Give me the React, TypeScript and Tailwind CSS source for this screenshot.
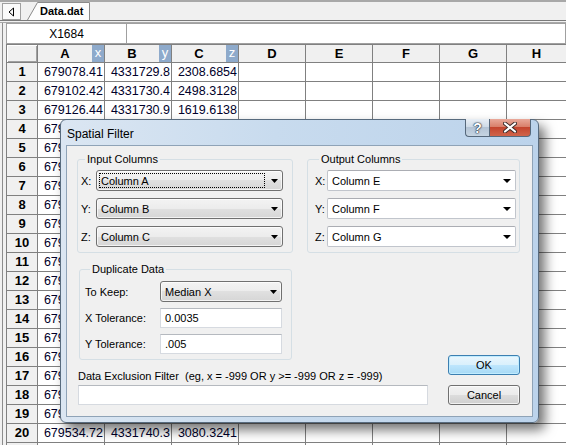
import React from "react";

const data: string[][] = [
  ["679078.41", "4331729.8", "2308.6854"],
  ["679102.42", "4331730.4", "2498.3128"],
  ["679126.44", "4331730.9", "1619.6138"],
  ["679150.45", "", ""],
  ["679174.46", "", ""],
  ["679198.48", "", ""],
  ["679222.49", "", ""],
  ["679246.50", "", ""],
  ["679270.52", "", ""],
  ["679294.53", "", ""],
  ["679318.54", "", ""],
  ["679342.56", "", ""],
  ["679366.57", "", ""],
  ["679390.58", "", ""],
  ["679414.60", "", ""],
  ["679438.61", "", ""],
  ["679462.62", "", ""],
  ["679486.64", "", ""],
  ["679510.65", "", ""],
  ["679534.72", "4331740.3", "3080.3241"],
  ["", "", ""],
];

const cols = ["A", "B", "C", "D", "E", "F", "G"];
const badges: Record<string, string> = { A: "x", B: "y", C: "z" };

const Arrow = () => (
  <svg width="7" height="4" viewBox="0 0 7 4" className="shrink-0">
    <path d="M0 0H7L3.5 4Z" fill="#000" />
  </svg>
);

function GraySelect({ text, focus, w }: { text: string; focus?: boolean; w: string }) {
  return (
    <div
      className={`${w} h-[21px] flex items-center rounded-[3px] border border-[#707070] bg-[linear-gradient(180deg,#f3f3f3_0%,#ececec_50%,#e0e0e0_50%,#d6d6d6_100%)] shadow-[inset_0_0_0_1px_rgba(255,255,255,0.7)] pl-[2px] pr-[4px]`}
    >
      <div className="flex-1 flex items-center">
        {focus ? (
          <span className="w-[166px] h-[15px] flex items-center pl-[1px] border border-dotted border-[#000]">
            {text}
          </span>
        ) : (
          <span className="pl-[2px]">{text}</span>
        )}
      </div>
      <Arrow />
    </div>
  );
}

function WhiteSelect({ text }: { text: string }) {
  return (
    <div className="flex-1 h-[21px] flex items-center rounded-[2px] border border-[#c1c5cc] border-t-[#abadb3] bg-white pl-[4px] pr-[4px]">
      <span className="flex-1">{text}</span>
      <svg width="8" height="4" viewBox="0 0 8 4" className="shrink-0">
        <path d="M0 0H8L4 4Z" fill="#000" />
      </svg>
    </div>
  );
}

function TextBox({ text, w }: { text: string; w: string }) {
  return (
    <div className={`${w} h-[20px] flex items-center border border-[#d6dae0] border-t-[#b5b9bf] bg-white pl-[4px]`}>
      {text}
    </div>
  );
}

export default function App() {
  return (
    <div className="relative w-[566px] h-[445px] overflow-hidden bg-[#f0f0f0] font-['Liberation_Sans',Arial,sans-serif] text-black">
      {/* Tab strip */}
      <div className="h-[21px] border-t-2 border-b border-t-[#a8a8a8] border-b-[#7a7a7a] flex items-end">
        <div className="ml-[2px] mb-[1px] w-[19px] h-[17px] border border-[#a0a0a0] bg-[#fafafa] flex items-center justify-center self-start mt-[1px]">
          <svg width="7" height="10" viewBox="0 0 7 10">
            <path d="M5.5 1V9L1 5Z" fill="none" stroke="#000" strokeWidth="1" />
          </svg>
        </div>
        <div className="relative ml-[6px] w-[64px] h-[19px]">
          <svg className="absolute inset-0" width="64" height="19" viewBox="0 0 64 19">
            <path d="M0.5 19L10.5 1.5H62.5V19" fill="#fdfdfd" stroke="#8a8a8a" strokeWidth="1" />
          </svg>
          <span className="absolute left-[13px] top-[3px] text-[11px] leading-[14px] font-bold">Data.dat</span>
        </div>
      </div>
      <div className="h-[2px] border-b border-[#a8a8a8]" />

      {/* Body */}
      <div className="ml-[2px] border-l border-[#8c8c8c] pl-[3px]">
        {/* name bar */}
        <div className="h-[21px] flex bg-white">
          <div className="w-[121px] border border-[#a0a0a0] flex items-center justify-center text-[12px]">X1684</div>
          <div className="flex-1 border border-l-0 border-[#a0a0a0]" />
        </div>

        {/* grid */}
        <div className="flex flex-col text-[13px]">
          <div className="flex h-[19px]">
            <div className="w-[32px] shrink-0 border border-[#808080] bg-[#f0f0f0] shadow-[inset_1px_1px_0_#fff,inset_-1px_-1px_0_#a0a0a0]" />
            {cols.map((c) => (
              <div
                key={c}
                className="w-[67px] shrink-0 flex border-t border-r border-b border-[#808080] bg-[#f0f0f0] font-bold leading-[17px]"
              >
                <span className="flex-1 text-center">{c}</span>
                {badges[c] && (
                  <span className="w-[12px] bg-[#8eaacb] text-white font-normal text-center leading-[15px]">
                    {badges[c]}
                  </span>
                )}
              </div>
            ))}
            <div className="flex-1 border-t border-b border-[#808080] bg-[#f0f0f0] font-bold text-center leading-[17px]">
              H
            </div>
          </div>
          {data.map((r, i) => (
            <div key={i} className="flex h-[19px]">
              <div className="w-[32px] shrink-0 border-l border-r border-b border-[#808080] bg-[#f0f0f0] font-bold text-center leading-[18px]">
                {i < 20 ? i + 1 : ""}
              </div>
              {cols.map((c, j) => (
                <div
                  key={c}
                  className="w-[67px] shrink-0 border-r border-b border-[#808080] bg-white text-right pr-[1px] text-[12.5px] leading-[18px] text-[#00002a] overflow-hidden whitespace-nowrap"
                >
                  {j < 3 ? r[j] : ""}
                </div>
              ))}
              <div className="flex-1 border-b border-[#808080] bg-white" />
            </div>
          ))}
        </div>
      </div>

      {/* Dialog */}
      <div className="absolute left-[60px] top-[119px] w-[479px] h-[304px] rounded-[6px] border border-[#586b7e] bg-[linear-gradient(90deg,#dbe6f2_0%,#c8dbee_45%,#bcd3eb_100%)] shadow-[6px_7px_12px_rgba(0,0,0,0.55)] flex flex-col px-[5px] pb-[5px]">
        <div className="h-[25px] flex justify-between shrink-0">
          <span className="pl-[1px] pt-[6px] text-[12px] leading-[16px]">Spatial Filter</span>
          <div className="flex -mt-[1px] mr-[2px] h-[18px]">
            <div className="w-[24px] h-[18px] rounded-bl-[4px] border border-t-0 border-r-0 border-[#56687b] bg-[linear-gradient(180deg,#e8eef5_0%,#cfdbe7_45%,#b4c4d5_50%,#c6d4e2_100%)] flex items-center justify-center text-white font-bold text-[14px] leading-[14px] [text-shadow:0_0_1px_#1c2a38,0_0_1px_#1c2a38,0_0_2px_#1c2a38]">
              ?
            </div>
            <div className="w-[42px] h-[18px] rounded-br-[4px] border border-t-0 border-[#56687b] bg-[linear-gradient(180deg,#e9a99a_0%,#d9806b_45%,#c4452e_50%,#d0644a_100%)] flex items-center justify-center">
              <svg width="14" height="11" viewBox="0 0 14 11">
                <path d="M2 1.5L12 9.5M12 1.5L2 9.5" stroke="#3a2a28" strokeWidth="4" strokeLinecap="round" />
                <path d="M2 1.5L12 9.5M12 1.5L2 9.5" stroke="#fff" strokeWidth="2.2" strokeLinecap="round" />
              </svg>
            </div>
          </div>
        </div>

        {/* client */}
        <div className="flex-1 border border-[#8fa3b7] bg-[#f0f0f0] pl-[10px] pr-[12px] pt-[5px] text-[11px] leading-[16px]">
          <div className="flex gap-[14px]">
            <fieldset className="w-[216px] border border-[#d5dfe5] rounded-[3px] pl-[3px] pr-[9px] pt-[3px] pb-[5px]">
              <legend className="ml-[4px] px-[2px]">Input Columns</legend>
              <div className="flex flex-col gap-[7px]">
                {[
                  ["X:", "Column A"],
                  ["Y:", "Column B"],
                  ["Z:", "Column C"],
                ].map(([l, t], i) => (
                  <div key={l} className="flex items-center">
                    <span className="w-[15px]">{l}</span>
                    <GraySelect text={t} focus={i === 0} w="flex-1" />
                  </div>
                ))}
              </div>
            </fieldset>
            <fieldset className="w-[213px] border border-[#d5dfe5] rounded-[3px] pl-[7px] pr-[3px] pt-[3px] pb-[5px]">
              <legend className="ml-[4px] px-[2px]">Output Columns</legend>
              <div className="flex flex-col gap-[7px]">
                {[
                  ["X:", "Column E"],
                  ["Y:", "Column F"],
                  ["Z:", "Column G"],
                ].map(([l, t]) => (
                  <div key={l} className="flex items-center">
                    <span className="w-[12px]">{l}</span>
                    <WhiteSelect text={t} />
                  </div>
                ))}
              </div>
            </fieldset>
          </div>

          <div className="mt-[8px] flex justify-between items-end">
            <div className="flex flex-col w-[351px]">
              <fieldset className="ml-[2px] w-[213px] border border-[#d5dfe5] rounded-[3px] pl-[5px] pr-[9px] pt-[4px] pb-[5px]">
                <legend className="ml-[5px] px-[2px]">Duplicate Data</legend>
                <div className="flex flex-col gap-[6px]">
                  <div className="flex items-center">
                    <span className="w-[75px]">To Keep:</span>
                    <GraySelect text="Median X" w="flex-1" />
                  </div>
                  <div className="flex items-center">
                    <span className="w-[75px]">X Tolerance:</span>
                    <TextBox text="0.0035" w="flex-1" />
                  </div>
                  <div className="flex items-center">
                    <span className="w-[75px]">Y Tolerance:</span>
                    <TextBox text=".005" w="flex-1" />
                  </div>
                </div>
              </fieldset>
              <div className="mt-[8px] ml-[1px] whitespace-pre">
                Data Exclusion Filter  (eg, x = -999 OR y &gt;= -999 OR z = -999)
              </div>
              <div className="mt-[1px] ml-[1px] w-[350px] h-[20px] border border-[#d6dae0] border-t-[#b5b9bf] bg-white" />
            </div>
            <div className="flex flex-col gap-[10px] w-[72px]">
              <div className="h-[20px] rounded-[3px] border border-[#3c7fb1] bg-[linear-gradient(180deg,#eaf6fd_0%,#d9f0fc_50%,#bee6fd_50%,#a7d9f5_100%)] shadow-[inset_0_0_0_1px_#c0ecff] flex items-center justify-center">
                OK
              </div>
              <div className="h-[20px] rounded-[3px] border border-[#707070] bg-[linear-gradient(180deg,#f2f2f2_0%,#ebebeb_50%,#dddddd_50%,#cfcfcf_100%)] shadow-[inset_0_0_0_1px_rgba(255,255,255,0.7)] flex items-center justify-center">
                Cancel
              </div>
            </div>
          </div>
        </div>
      </div>
    </div>
  );
}
